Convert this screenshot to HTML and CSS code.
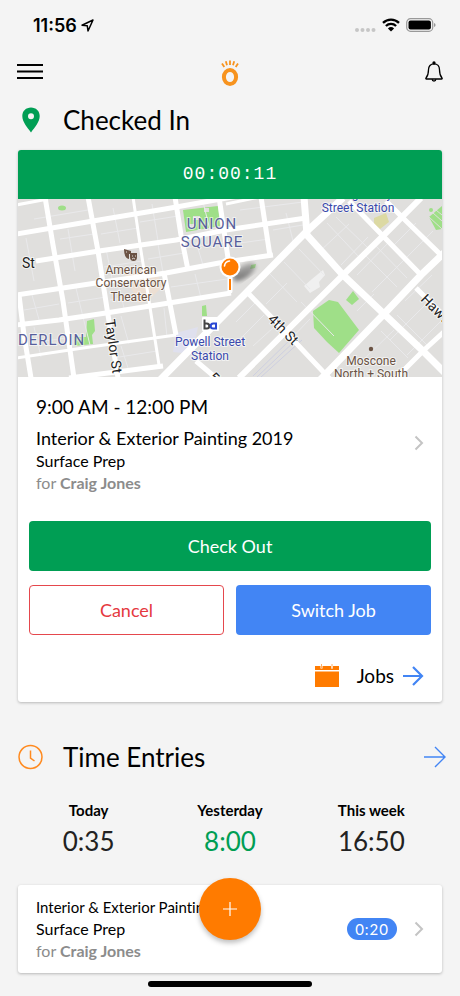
FILE: index.html
```html
<!DOCTYPE html>
<html lang="en">
<head>
  <meta charset="utf-8">
  <meta name="viewport" content="width=device-width, initial-scale=1">
  <title>Checked In</title>
  <link rel="stylesheet" href="styles.css">
</head>
<body>

  <!-- Status bar -->
  <div class="statusbar">
    <div class="clock">
      <span>11:56</span>
      <svg width="13" height="13" viewBox="0 0 13 13"><path d="M1 6.2 12 1 7 12 6.3 6.8Z" fill="none" stroke="#000" stroke-width="1.5" stroke-linejoin="round"/></svg>
    </div>
    <div class="signals">
      <svg width="22" height="14" viewBox="0 0 22 14" fill="#c6c6c6"><circle cx="3" cy="12" r="2"/><circle cx="8.500" cy="12" r="2"/><circle cx="14" cy="12" r="2"/><circle cx="19.500" cy="12" r="2"/></svg>
      <svg width="18" height="14" viewBox="0 0 18 14"><path d="M1 4.900a11.500 11.500 0 0 1 16 0M3.900 8a7.300 7.300 0 0 1 10.200 0" fill="none" stroke="#000" stroke-width="2.300"/><path d="M9 13.500 5.900 10.400a4.500 4.500 0 0 1 6.200 0Z"/></svg>
      <svg width="30" height="14" viewBox="0 0 30 14"><rect x=".7" y=".7" width="26" height="12.600" rx="3.800" fill="none" stroke="#999" stroke-width="1.200"/><rect x="2.500" y="2.500" width="22.400" height="9" rx="2"/><path d="M28 5v4q1.600-.5 1.600-2T28 5Z" fill="#999"/></svg>
    </div>
  </div>

  <!-- Top navigation -->
  <header class="topbar">
    <button class="icon-btn" aria-label="Menu">
      <svg width="26" height="18" viewBox="0 0 26 18"><path d="M0 2h26M0 8.500h26M0 15h26" stroke="#000" stroke-width="2"/></svg>
    </button>
    <svg class="logo" width="20" height="28" viewBox="0 0 20 28" fill="none" stroke="#f7931e">
      <ellipse cx="10" cy="19" rx="6.100" ry="7" stroke-width="4"/>
      <path d="M2 5.500 4.300 9M5.800 3.300 7 7.300M10 2.500v4.500M14.200 3.300 13 7.300M18 5.500 15.700 9" stroke-width="1.800"/>
    </svg>
    <button class="icon-btn" aria-label="Notifications">
      <svg width="18" height="22" viewBox="0 0 18 22" fill="none" stroke="#000" stroke-width="1.300" stroke-linejoin="round"><path d="M9 2.800C5.500 2.800 3.500 5.400 3.500 8.700 3.500 13 2.700 15 1 17q-.6 1 .5 1h15q1.100 0 .5-1C15.300 15 14.500 13 14.500 8.700c0-3.300-2-5.900-5.500-5.900Z"/><path d="M7.200 18.300a1.800 1.800 0 0 0 3.600 0"/><circle cx="9" cy="2" r="1" fill="#000"/></svg>
    </button>
  </header>

  <main class="page">

    <!-- Current check-in -->
    <div class="section-head">
      <svg class="section-icon" width="26" height="26" viewBox="0 0 26 26"><path fill="#009e54" fill-rule="evenodd" d="M13 .5C8 .5 4.300 4 4.300 9 4.300 15 9.500 20.500 13 25.500 16.500 20.500 21.700 15 21.700 9 21.700 4 18 .5 13 .5Zm0 5.700a3 3 0 1 1 0 6 3 3 0 0 1 0-6Z"/></svg>
      <h1>Checked In</h1>
    </div>

    <section class="card checkin">
      <div class="timer">00:00:11</div>

      <svg class="map" viewBox="0 0 424 178" preserveAspectRatio="xMidYMid slice" role="img" aria-label="Job map">
        <defs>
          <linearGradient id="shade" x1="0" x2="1" y1="1" y2="0"><stop offset="0" stop-color="#555" stop-opacity=".9"/><stop offset="1" stop-color="#777" stop-opacity=".4"/></linearGradient>
          <filter id="soft"><feGaussianBlur stdDeviation="2"/></filter>
        </defs>
        <rect width="424" height="178" fill="#e0dfdd"/>

        <!-- parks and places -->
        <g fill="#9fdf88">
          <path d="M165 11 200 7 202 27 168 33Z"/>
          <path d="M295 112 311 101 320 103 341 131 321 154 309 143 296 129Z"/>
          <path d="M328 101 335 92 341 100 334 106Z"/>
          <path d="M69 122 76 120 77 132 74 136 75 145 56 147 56 138 68 138Z"/>
          <path d="M184 107 188 106 189 117 184 117Z"/>
          <path d="M411 18 424 7V30L418 31Z"/>
          <ellipse cx="44" cy="9" rx="4" ry="2.500"/>
          <circle cx="413" cy="11" r="2"/>
          <path d="M233 66 238 65 237 69 232 70Z"/>
        </g>
        <g fill="#e0dfdd"><path d="M175 17h7v4h-7ZM186 9h5v4h-5ZM170 25h6v4h-6Z"/></g>
        <path d="M411 18 424 30M415 14 424 22M418 11 424 16" stroke="#e0dfdd"/>
        <path d="M356 19 368 14 371 23 362 30 356 25Z" fill="#dcd9a3"/>
        <path d="M286 87 294 80 305 71 307 76 301 83 302 88 292 94Z" fill="#f0f0f0"/>
        <path d="M106 73 138 70 144 88 130 102 120 104Z" fill="#ecdfd3"/>
        <path d="M158 134 180 128 174 155 155 153Z" fill="#dfe0ee"/>

        <!-- alleys -->
        <g fill="none" stroke="#e9e9eb" stroke-width="1">
          <path d="M8 39 16 82M16 20 70 11M50 30 57 72M42 40 76 35M57 85 65 118M50 104 88 98M95 9 102 44M83 35 120 29M88 50 95 84M86 68 124 62M100 85 107 113M92 101 131 95M134 5 140 42M122 23 160 17M140 45 145 74M130 60 166 54M185 3 193 35M168 49 206 43M178 43 185 66M153 88 209 80M177 75 183 99M14 96 22 124M6 111 41 105M16 128 23 158M12 144 48 139M65 118 72 146M103 117 111 145M103 147 111 172M95 159 139 152M146 109 149 138M222 11 285 3M255 31 285 26M268 14 275 42M222 44 251 40"/>
          <path d="M309 24 341 58M318 18 350 49M301 53 331 25M323 66 350 38M266 63 292 90M252 75 279 103M281 50 307 77M248 105 269 84M301 103 324 80M346 55 379 88M357 46 389 79M339 76 370 44M354 93 393 54M374 48 398 24M385 62 415 32M339 112 356 95M363 132 390 159M379 116 410 147M372 141 409 104M389 156 424 121M265 128 290 154M283 103 316 137M267 146 292 120M218 123 237 104M225 137 246 116M235 147 256 128M342 164 376 131M387 102 414 76"/>
        </g>
        <g fill="none" stroke="#cdcfe0" stroke-width="1">
          <path d="M235 177 276 137M239 178 280 139M243 178 284 141"/>
        </g>

        <!-- streets -->
        <g fill="none" stroke="#fff" stroke-width="5" stroke-linejoin="round">
          <path d="M-2 35 75 22 147 10 220 -3"/>
          <path d="M18 62 81 52 158 41 208 31 288 19"/>
          <path d="M-2 96 78 84 148 74 201 64 255 56"/>
          <path d="M-2 126 41 121 88 114 151 104 213 94"/>
          <path d="M51 179 145 167"/>
          <path d="M27 -2 35 46 45 102 56 179"/>
          <path d="M70 -2 80 52 90 116 100 179"/>
          <path d="M157 -2 163 36 170 71M201 -2 210 59M146 74 158 136M1 96 6 136 13 179"/>
          <path d="M243 -2 252 57" />
          <path d="M228 92 261 126 312 180M331 2 365 37 403 76M368 2 385 19 428 61"/>
          <path d="M221 179 325 76 365 37 403 -1" stroke-width="6"/>
          <path d="M378 179 405 152 428 131M178 162 198 179M398 89 428 119"/>
        </g>
        <g fill="none" stroke="#fff" stroke-width="7">
          <path d="M141 182 208 114 228 94 288 33 325 -1"/>
          <path d="M286 -2 289 36 325 76 365 114 405 152 432 179"/>
          <path d="M301 182 365 116 403 76 428 52"/>
        </g>
        <g fill="none" stroke="#fff" stroke-width="3">
          <path d="M115 -2 123 52 131 102 141 166M-2 159 65 149 158 136M-2 6 30 0M208 5 242 -2"/>
        </g>

        <!-- labels -->
        <g class="area">
          <text x="194" y="30" text-anchor="middle">UNION</text>
          <text x="194" y="48" text-anchor="middle">SQUARE</text>
          <text x="0" y="146">DERLOIN</text>
        </g>
        <g class="street">
          <text x="4" y="69">St</text>
          <text transform="translate(87 121) rotate(82)">Taylor St</text>
          <text transform="translate(249 121) rotate(45)">4th St</text>
          <text transform="translate(402 101) rotate(45)">Hawt</text>
          <text transform="translate(190 179) rotate(45)">5</text>
        </g>
        <g class="place" text-anchor="middle">
          <text x="113" y="75">American</text>
          <text x="113" y="88">Conservatory</text>
          <text x="113" y="102">Theater</text>
          <text x="353" y="166">Moscone</text>
          <text x="353" y="179">North + South</text>
        </g>
        <g class="station" text-anchor="middle">
          <text x="340" y="-1">Montgomery</text>
          <text x="340" y="13">Street Station</text>
          <text x="192" y="147">Powell Street</text>
          <text x="192" y="161">Station</text>
        </g>
        <circle cx="353" cy="150" r="2.200" fill="#6b5344"/>
        <!-- theater masks -->
        <path d="M106 50 113 52V55H111V60Q106 59 106 50ZM112 54H119V58Q119 62 115.500 62 112 62 112 58Z" fill="#6b5344"/>
        <path d="M108 53h1M114 57h1M117 57h1M114 60q1.500-1.500 3 0" stroke="#fff" stroke-width=".8" fill="none"/>
        <!-- rail logo -->
        <rect x="184" y="118" width="17" height="14" rx="1" fill="#fff"/>
        <g fill="none" stroke-width="2"><path d="M186.500 120.500v9h2.300a2.200 2.200 0 0 0 0-5h-2.300" stroke="#444"/><path d="M198 123.500v6h-2.800a2.500 2.500 0 0 1 0-5h2.800" stroke="#2b48d4"/></g>

        <!-- job pin -->
        <ellipse cx="226" cy="73" rx="13" ry="6" transform="rotate(-35 226 73)" fill="url(#shade)" filter="url(#soft)"/>
        <path d="M212 79v13" stroke="#fff" stroke-width="5" stroke-linecap="round"/>
        <path d="M212 80v11" stroke="#ff7b00" stroke-width="2"/>
        <circle cx="212" cy="68" r="9.500" fill="#ff7b00" stroke="#fff" stroke-width="2"/>
        <path d="M206.500 67Q207 62.500 211.500 62" fill="none" stroke="#fff" stroke-width="1.600" stroke-linecap="round"/>
      </svg>

      <a class="job" href="#">
        <span class="job-text">
          <span class="job-time">9:00 AM - 12:00 PM</span>
          <span class="job-name">Interior &amp; Exterior Painting 2019</span>
          <span class="line">Surface Prep</span>
          <span class="line client">for <b>Craig Jones</b></span>
        </span>
        <svg class="chevron" width="10" height="16" viewBox="0 0 10 16"><path d="M1.500 1.500 8 8 1.500 14.500"/></svg>
      </a>

      <div class="actions">
        <button class="btn checkout">Check Out</button>
        <button class="btn cancel">Cancel</button>
        <button class="btn switch">Switch Job</button>
      </div>

      <a class="jobs-link" href="#">
        <svg width="24" height="24" viewBox="0 0 24 24"><path d="M0 2h24v4H0ZM0 7.500h24V23H0Z" fill="#ff7b00"/><path d="M6.500 0v4.500M17 0v4.500" stroke="#fff" stroke-width="2"/><path d="M6.500 0v4M17 0v4" stroke="#ffb066" stroke-width="1"/></svg>
        <span>Jobs</span>
        <svg width="22" height="20" viewBox="0 0 22 20"><path d="M1 10h19M11 1l9 9-9 9" fill="none" stroke="#4285f4" stroke-width="2.200"/></svg>
      </a>
    </section>

    <!-- Time entries -->
    <div class="section-head entries-head">
      <svg class="section-icon" width="26" height="26" viewBox="0 0 26 26" fill="none" stroke="#ff8a1f" stroke-width="1.500"><circle cx="12.500" cy="13" r="11.500"/><path d="M12.500 6.500v7.500l4 3"/></svg>
      <h2>Time Entries</h2>
      <a class="more" href="#" aria-label="All time entries">
        <svg width="22" height="22" viewBox="0 0 22 22"><path d="M0 11h21M11 1l10 10-10 10" fill="none" stroke="#4285f4" stroke-width="1.400"/></svg>
      </a>
    </div>

    <dl class="totals">
      <div><dt>Today</dt><dd>0:35</dd></div>
      <div><dt>Yesterday</dt><dd class="good">8:00</dd></div>
      <div><dt>This week</dt><dd>16:50</dd></div>
    </dl>

    <a class="card entry" href="#">
      <span class="job-text">
        <span class="line entry-name">Interior &amp; Exterior Painting</span>
        <span class="line">Surface Prep</span>
        <span class="line client">for <b>Craig Jones</b></span>
      </span>
      <span class="pill">0:20</span>
      <svg class="chevron" width="10" height="16" viewBox="0 0 10 16"><path d="M1.500 1.500 8 8 1.500 14.500"/></svg>
    </a>
  </main>

  <button class="fab" aria-label="Add time entry">
    <svg width="14" height="14" viewBox="0 0 14 14"><path d="M7 0v14M0 7h14" stroke="#fff" stroke-width="1.200"/></svg>
  </button>
  <div class="home-bar"></div>

</body>
</html>
```

FILE: styles.css
```css
* { box-sizing: border-box; }

body {
  margin: 0;
  background: #f4f4f4;
  color: #000;
  font-family: Lato, "Open Sans", sans-serif;
  font-variant-ligatures: none;
}

svg { display: block; flex: none; }
a { color: inherit; text-decoration: none; }
button { font-family: inherit; cursor: pointer; }

/* status bar */
.statusbar {
  display: flex;
  justify-content: space-between;
  align-items: center;
  height: 50px;
  padding: 0 24px 0 33px;
}
.clock {
  display: flex;
  align-items: center;
  gap: 4px;
  font: 600 18px Inter, sans-serif;
}
.signals {
  display: flex;
  align-items: center;
  gap: 6px;
}

/* top navigation */
.topbar {
  display: grid;
  grid-template-columns: 1fr auto 1fr;
  align-items: center;
  height: 44px;
  padding: 0 17px;
}
.icon-btn {
  padding: 0;
  border: none;
  background: none;
  justify-self: start;
}
.icon-btn:last-child { justify-self: end; }

.page { padding: 0 18px 24px; }

.section-head {
  display: flex;
  align-items: center;
  height: 56px;
  padding-bottom: 4px;
}
.section-icon { margin-right: 19px; }
h1, h2 {
  margin: 0;
  font-size: 26px;
  line-height: 32px;
  font-weight: 400;
}

.card {
  background: #fff;
  border-radius: 3px;
  box-shadow: 0 1px 3px rgba(0, 0, 0, 0.25);
}

/* check-in card */
.checkin { overflow: hidden; }
.timer {
  height: 49px;
  background: #009e54;
  color: #fff;
  font: 18px/49px "Liberation Mono", monospace;
  letter-spacing: 1px;
  text-align: center;
}
.map {
  width: 100%;
  height: 178px;
}
.map text {
  font-family: Roboto, sans-serif;
  paint-order: stroke;
  stroke: rgba(255, 255, 255, 0.6);
  stroke-width: 2px;
}
.map .area text {
  fill: #585f9c;
  font-size: 15px;
  letter-spacing: 1px;
}
.map .street text { fill: #222; font-size: 14px; }
.map .place text {
  fill: #6b5344;
  font-size: 12px;
}
.map .station text {
  fill: #3a49ac;
  font-size: 12px;
}

.job {
  display: flex;
  align-items: center;
  justify-content: space-between;
  padding: 14px 18px 27px;
}
.job-text {
  display: flex;
  flex-direction: column;
}
.job-time {
  font-size: 19px;
  line-height: 32px;
  margin-bottom: 3px;
}
.job-name {
  font-size: 18px;
  line-height: 24px;
}
.line {
  font-size: 16px;
  line-height: 22px;
}
.client { color: #8c8c8c; }
.chevron path {
  fill: none;
  stroke: #c4c4c4;
  stroke-width: 2;
}

.actions {
  display: grid;
  grid-template-columns: 1fr 1fr;
  gap: 14px 12px;
  padding: 0 11px;
}
.btn {
  height: 50px;
  border: none;
  border-radius: 4px;
  color: #fff;
  font-size: 18px;
}
.checkout {
  grid-column: 1 / 3;
  background: #009e54;
}
.cancel {
  background: #fff;
  border: 1px solid #e5484d;
  color: #e5393f;
}
.switch { background: #4285f4; }

.jobs-link {
  display: flex;
  align-items: center;
  justify-content: flex-end;
  height: 67px;
  padding: 14px 18px 0;
  font-size: 19px;
}
.jobs-link span { margin: 0 8px 0 18px; }

/* time entries */
.entries-head { margin-top: 29px; }
.more {
  margin-left: auto;
  margin-right: -4px;
}
.totals {
  display: grid;
  grid-template-columns: repeat(3, 1fr);
  margin: 12px 0 28px;
  text-align: center;
}
dt {
  font-size: 15px;
  line-height: 22px;
  font-weight: 700;
}
dd {
  margin: 4px 0 0;
  color: #222;
  font-size: 26px;
  line-height: 32px;
}
.good { color: #009e54; }

.entry {
  display: flex;
  align-items: center;
  height: 88px;
  padding: 0 18px;
}
.entry-name { font-size: 15px; }
.pill {
  margin-left: auto;
  margin-right: 17px;
  padding: 0 8px;
  border-radius: 11px;
  background: #4285f4;
  color: #fff;
  font-size: 15px;
  line-height: 22px;
  letter-spacing: 1px;
}

/* floating button and home indicator */
.fab {
  position: fixed;
  left: 50%;
  bottom: 56px;
  margin-left: -31px;
  display: flex;
  align-items: center;
  justify-content: center;
  width: 62px;
  height: 62px;
  padding: 0;
  border: none;
  border-radius: 50%;
  background: #ff7b00;
  box-shadow: 0 3px 5px rgba(0, 0, 0, 0.25);
}
.home-bar {
  position: fixed;
  left: 50%;
  bottom: 9px;
  width: 164px;
  height: 6px;
  margin-left: -82px;
  border-radius: 3px;
  background: #000;
}
```
